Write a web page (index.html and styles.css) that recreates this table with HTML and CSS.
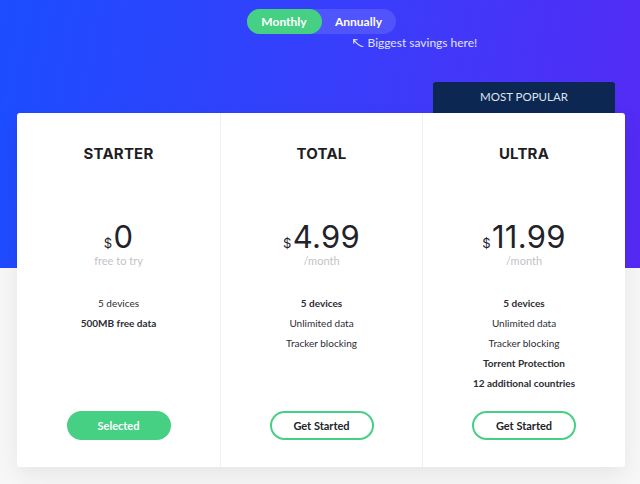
FILE: index.html
```html
<!DOCTYPE html>
<html>
<head>
<meta charset="utf-8">
<link rel="stylesheet" href="styles.css">
</head>
<body>
<div class="page">
  <div class="toggle-wrap">
    <div class="toggle">
      <span class="opt active">Monthly</span>
      <span class="opt">Annually</span>
    </div>
    <div class="note">
      <svg class="arrow" width="12" height="10" viewBox="0 0 12 10"><path d="M11 8.5 C8 8.5 5 6 1.8 1.8 M1.5 1.5 L1.8 5.2 M1.5 1.5 L5.2 1.8" fill="none" stroke="#dcd9ff" stroke-width="1.1" stroke-linecap="round"/></svg>
      <span>Biggest savings here!</span>
    </div>
  </div>
  <div class="plans">
    <div class="tab-row"><div class="popular">MOST POPULAR</div></div>
    <div class="card">
      <div class="col">
        <h2 class="title">STARTER</h2>
        <div class="price"><span class="cur">$</span>0</div>
        <div class="sub">free to try</div>
        <ul class="features">
          <li>5 devices</li>
          <li class="b">500MB free data</li>
        </ul>
        <button class="btn filled">Selected</button>
      </div>
      <div class="col">
        <h2 class="title">TOTAL</h2>
        <div class="price"><span class="cur">$</span>4.99</div>
        <div class="sub">/month</div>
        <ul class="features">
          <li class="b">5 devices</li>
          <li>Unlimited data</li>
          <li>Tracker blocking</li>
        </ul>
        <button class="btn outline">Get Started</button>
      </div>
      <div class="col">
        <h2 class="title">ULTRA</h2>
        <div class="price"><span class="cur">$</span>11.99</div>
        <div class="sub">/month</div>
        <ul class="features">
          <li class="b">5 devices</li>
          <li>Unlimited data</li>
          <li>Tracker blocking</li>
          <li class="b">Torrent Protection</li>
          <li class="b">12 additional countries</li>
        </ul>
        <button class="btn outline">Get Started</button>
      </div>
    </div>
  </div>
</div>
</body>
</html>
```

FILE: styles.css
```css
* { box-sizing: border-box; }
html, body { margin: 0; padding: 0; }
body {
  width: 640px;
  height: 484px;
  overflow: hidden;
  font-family: Lato, "Noto Sans", sans-serif;
  background: linear-gradient(100deg, #1c4dff 0%, #3a3dfb 55%, #552af4 100%) no-repeat top left / 100% 268px, #f7f7f8;
}
.page { display: flex; flex-direction: column; align-items: center; }
.toggle-wrap { padding-top: 9px; width: 149px; margin-left: 2px; }
.toggle {
  display: flex;
  height: 25px;
  width: 149px;
  border-radius: 13px;
  background: rgba(255,255,255,0.12);
}
.opt {
  display: flex; align-items: center; justify-content: center;
  color: #fff; font-weight: 700; font-size: 12px;
  border-radius: 13px;
}
.opt.active { width: 75px; background: #46d084; }
.opt:not(.active) { flex: 1; }
.note {
  display: flex; align-items: center; gap: 4px;
  margin-top: 2px; margin-left: 105px;
  white-space: nowrap;
  color: #e4e2ff; font-size: 12px; line-height: 14px;
}
.arrow { flex: none; }
.plans { width: 608px; margin-left: 2px; margin-top: 32px; }
.tab-row { display: flex; justify-content: flex-end; padding-right: 10px; }
.popular {
  width: 182px; height: 31px;
  background: #0b2752;
  border-radius: 3px 3px 0 0;
  color: #dfe3ee; font-size: 11.5px;
  display: flex; align-items: center; justify-content: center;
  padding-bottom: 3px;
}
.card {
  display: grid;
  grid-template-columns: 203px 202px 203px;
  background: #fff;
  border-radius: 3px;
  box-shadow: 0 8px 22px rgba(0,0,0,0.07);
}
.col {
  display: flex; flex-direction: column; align-items: center;
  padding: 32px 0 27px;
}
.col + .col { border-left: 1px solid #efefef; }
.title {
  margin: 0; font-family: Inter, sans-serif; font-weight: 700;
  font-size: 15px; line-height: 18px; color: #1e1e24; letter-spacing: 0.2px;
}
.price {
  margin-top: 58px;
  font-family: Inter, sans-serif; font-size: 31px; line-height: 31px;
  color: #22222a; font-weight: 400; letter-spacing: 0.3px;
}
.cur { font-size: 13px; line-height: 0; margin-right: 1px; }
.sub {
  margin-top: 2px; font-size: 11px; line-height: 13px; color: #c2c2c6;
}
.features {
  list-style: none; margin: 26px 0 18px; padding: 0; flex: 1;
  text-align: center;
}
.features li { font-size: 10px; line-height: 20px; color: #2c2c34; }
.features li.b { font-weight: 700; }
.btn {
  width: 104px; height: 29px; border-radius: 15px;
  font-family: Lato, sans-serif; font-weight: 700; font-size: 11px;
  cursor: pointer;
}
.btn.filled { background: #46d084; border: none; color: #fff; }
.btn.outline { background: #fff; border: 2px solid #46d084; color: #23232b; }
```
